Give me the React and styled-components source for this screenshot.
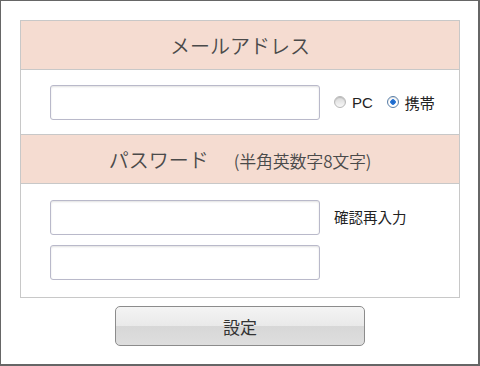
import React from "react";
import styled, { createGlobalStyle } from "styled-components";

const Global = createGlobalStyle`
  html, body { margin: 0; padding: 0; background: #fff; }
  body { font-family: "Liberation Sans", "Noto Sans CJK JP", sans-serif; }
  * { box-sizing: border-box; }
`;

const Frame = styled.div`
  width: 480px;
  height: 366px;
  border-style: solid;
  border-color: #666;
  border-width: 1px 2px 2px 1px;
  padding: 19px 0 0 19px;
  display: flex;
  flex-direction: column;
`;

const Panel = styled.div`
  width: 440px;
  border: 1px solid #c8c8c8;
  display: flex;
  flex-direction: column;
`;

const Header = styled.div`
  height: 49px;
  background: #f5dcd1;
  border-bottom: 1px solid #c8c8c8;
  display: flex;
  align-items: center;
  justify-content: center;
  gap: 25px;
  color: #4a4a4a;
  font-family: "Noto Sans CJK JP", sans-serif;
  font-weight: 350;
  font-size: 20px;
  line-height: 1;
  padding-top: 1px;
`;

const Note = styled.span`
  font-size: 17px;
  letter-spacing: -0.2px;
  padding-top: 2px;
`;

const Row = styled.div`
  display: flex;
  align-items: ${(p) => (p.$top ? "flex-start" : "center")};
  height: ${(p) => p.$h};
  padding: ${(p) => p.$pad};
  border-bottom: ${(p) => (p.$last ? "none" : "1px solid #c8c8c8")};
  gap: 14px;
`;

const Stack = styled.div`
  display: flex;
  flex-direction: column;
  gap: 10px;
`;

const Input = styled.input`
  width: 270px;
  height: 35px;
  border: 1px solid #b9b9ca;
  border-radius: 3px;
  box-shadow: inset 0 1px 2px rgba(0, 0, 0, 0.12);
  background: #fff;
  outline: none;
`;

const Radios = styled.div`
  display: flex;
  align-items: center;
  gap: 14px;
  font-size: 15px;
  color: #222;
`;

const RadioLabel = styled.label`
  display: flex;
  align-items: center;
  gap: 6px;
`;

const Dot = styled.span`
  width: 12px;
  height: 12px;
  border-radius: 50%;
  border: 1px solid ${(p) => (p.$on ? "#5a7fa8" : "#b8b8b8")};
  background: ${(p) =>
    p.$on
      ? "radial-gradient(circle at 50% 50%, #1b63c4 0, #2a78d8 2.5px, #fff 3px)"
      : "linear-gradient(#d8d8d8, #f8f8f8)"};
  box-shadow: inset 0 1px 1px rgba(0, 0, 0, 0.15);
`;

const Side = styled.span`
  font-family: "Noto Sans CJK JP", sans-serif;
  font-size: 14.5px;
  color: #222;
  padding-top: 6px;
`;

const Footer = styled.div`
  width: 440px;
  display: flex;
  justify-content: center;
  padding-top: 8px;
`;

const Button = styled.button`
  width: 250px;
  height: 40px;
  border: 1px solid #8c8c8c;
  border-radius: 5px;
  background: linear-gradient(#f4f4f4 0%, #e9e9e9 50%, #d7d7d7 50%, #dedede 100%);
  font-family: "Noto Sans CJK JP", sans-serif;
  font-size: 17px;
  color: #333;
  padding: 0;
`;

export default function App() {
  return (
    <>
      <Global />
      <Frame>
        <Panel>
          <Header>メールアドレス</Header>
          <Row $h="65px" $pad="0 0 0 29px">
            <Input type="text" />
            <Radios>
              <RadioLabel>
                <Dot />
                PC
              </RadioLabel>
              <RadioLabel>
                <Dot $on />
                携帯
              </RadioLabel>
            </Radios>
          </Row>
          <Header>
            <span>パスワード</span>
            <Note>(半角英数字8文字)</Note>
          </Header>
          <Row $top $last $pad="16px 0 17px 29px">
            <Stack>
              <Input type="password" />
              <Input type="password" />
            </Stack>
            <Side>確認再入力</Side>
          </Row>
        </Panel>
        <Footer>
          <Button>設定</Button>
        </Footer>
      </Frame>
    </>
  );
}
